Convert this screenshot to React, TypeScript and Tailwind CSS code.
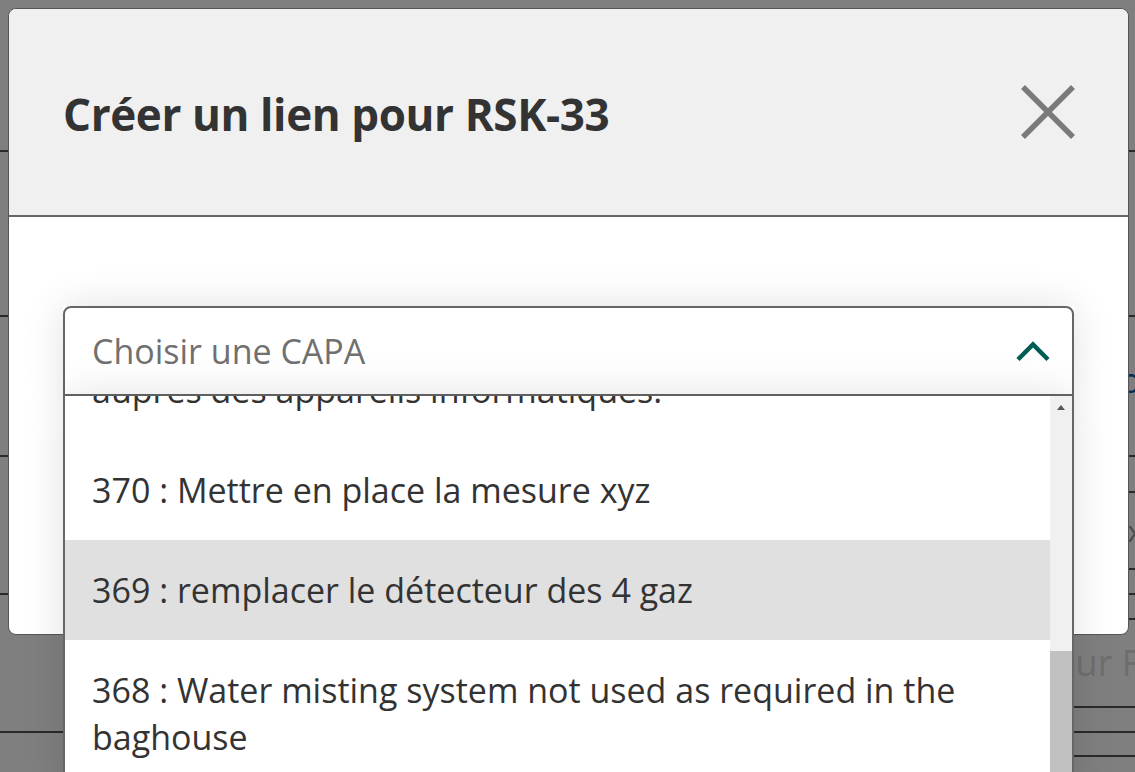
import React from 'react';

const options = [
  { id: 371, label: '371 : Sensibiliser le personnel aux risques électriques liés au matériel', tail: 'auprès des appareils informatiques.' },
  { id: 370, label: '370 : Mettre en place la mesure xyz' },
  { id: 369, label: '369 : remplacer le détecteur des 4 gaz' },
  { id: 368, label: '368 : Water misting system not used as required in the baghouse' },
  { id: 367, label: '367 : Vérifier les extincteurs' },
];

// page behind the dialog, only its edges are seen
const BackgroundPage: React.FC = () => (
  <div className="flex h-full w-full flex-col bg-white text-[#222]">
    <div className="h-[152px] shrink-0 border-b-2 border-[#555]" />
    <div className="flex h-[165px] shrink-0 items-center border-b-2 border-[#555] pt-[10px]">
      <h1 className="-ml-[118px] text-[44px] font-bold text-black">Statu</h1>
    </div>
    <div className="flex h-[140px] shrink-0 items-center justify-end border-b-2 border-[#555] pb-[12px]">
      <span className="-mr-[6px] text-[34px] text-[#0b5cad]">Co</span>
    </div>
    <div className="flex h-[138px] shrink-0 border-b-2 border-[#555]">
      <div className="flex-1" />
      <div className="flex w-[500px] flex-col">
        <div className="h-[36px] border-b-2 border-[#555]" />
        <div className="flex h-[77px] items-center justify-end border-b-2 border-[#555] text-[30px] text-[#999]">
          <span className="-mr-[8px]">xx</span>
        </div>
      </div>
    </div>
    <div className="flex h-[138px] shrink-0 border-b-2 border-[#555]">
      <div className="flex-1" />
      <div className="flex w-[500px] flex-col">
        <div className="h-[25px] border-b-2 border-[#555]" />
        <div className="flex h-[88px] items-center justify-end border-b-2 border-[#555]">
          <span className="-mr-[20px] text-[36px] text-[#dcdcdc]">Pour Fr</span>
        </div>
      </div>
    </div>
    <div className="flex h-[24px] shrink-0">
      <div className="flex-1" />
      <div className="w-[500px] border-b-2 border-[#555]" />
    </div>
  </div>
);

const App: React.FC = () => {
  return (
    <div
      className="relative h-[772px] w-[1135px] overflow-hidden"
      style={{ fontFamily: '"Open Sans", "Noto Sans", sans-serif' }}
    >
      <BackgroundPage />
      <div className="absolute inset-0 bg-black/50" />

      <div className="absolute left-[8px] top-[8px] h-[627px] w-[1121px] rounded-[8px] border border-[#555] bg-white">
        <div className="flex h-[208px] items-center justify-between rounded-t-[8px] border-b-2 border-[#666] bg-[#f0f0f0] pl-[54px] pr-[52px]">
          <h2 className="pt-[4px] text-[44px] font-bold tracking-[-0.4px] text-[#333]">Créer un lien pour RSK-33</h2>
          <button aria-label="Fermer" className="flex h-[56px] w-[56px] items-center justify-center">
            <svg width="56" height="56" viewBox="0 0 56 56">
              <path d="M3 3 L53 53 M53 3 L3 53" stroke="#7a7a7a" strokeWidth="5.5" fill="none" />
            </svg>
          </button>
        </div>

        <div className="px-[54px] pt-[89px]">
          <div className="relative shadow-[0_0_40px_rgba(0,0,0,0.12)]">
            <div className="flex h-[90px] items-center justify-between rounded-t-[8px] border-2 border-[#666] bg-white pl-[27px] pr-[22px]">
              <span className="text-[34px] text-[#707070]">Choisir une CAPA</span>
              <svg width="34" height="24" viewBox="0 0 34 24">
                <path d="M2 20.5 L17 5.5 L32 20.5" stroke="#005c55" strokeWidth="4.5" fill="none" />
              </svg>
            </div>

            <div className="absolute left-0 right-0 top-full flex h-[400px] overflow-hidden border-x-2 border-[#666] bg-white shadow-[0_0_40px_rgba(0,0,0,0.12)]">
              <ul className="mt-[-103px] min-w-0 flex-1">
                {options.map((o) => (
                  <li
                    key={o.id}
                    className={`px-[27px] py-[26.5px] text-[34px] leading-[47px] text-[#333] ${
                      o.id === 369 ? 'bg-[#e0e0e0]' : ''
                    }`}
                  >
                    {o.tail ? (
                      <>
                        <span className="block truncate">{o.label}</span>
                        <span className="block">{o.tail}</span>
                      </>
                    ) : (
                      o.label
                    )}
                  </li>
                ))}
              </ul>
              <div className="flex w-[22px] shrink-0 flex-col bg-[#f0f0f0]">
                <div className="flex h-[22px] items-center justify-center">
                  <svg width="8" height="6" viewBox="0 0 8 6">
                    <path d="M0 6 L4 1 L8 6 Z" fill="#555" />
                  </svg>
                </div>
                <div className="h-[233px]" />
                <div className="flex-1 bg-[#c1c1c1]" />
              </div>
            </div>
          </div>
        </div>
      </div>
    </div>
  );
};

export default App;
